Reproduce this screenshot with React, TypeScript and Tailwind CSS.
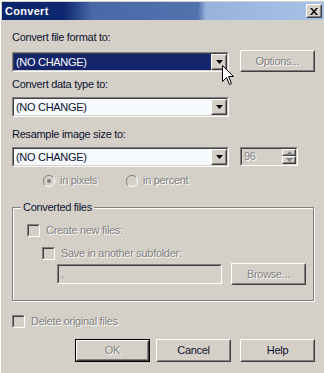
import React from 'react';

// Win2000 style "Convert" dialog

function Sunken({ className = '', inner = '', children }: { className?: string; inner?: string; children?: React.ReactNode }) {
  return (
    <div className={`border border-t-[#808080] border-l-[#808080] border-r-white border-b-white ${className}`}>
      <div className={`h-full border border-t-[#404040] border-l-[#404040] border-r-[#d4d0c8] border-b-[#d4d0c8] ${inner}`}>
        {children}
      </div>
    </div>
  );
}

function Raised({ className = '', children }: { className?: string; children?: React.ReactNode }) {
  return (
    <div className={`border border-t-white border-l-white border-r-[#404040] border-b-[#404040] bg-[#d4d0c8] ${className}`}>
      <div className="h-full border border-t-[#d4d0c8] border-l-[#d4d0c8] border-r-[#808080] border-b-[#808080] flex items-center justify-center">
        {children}
      </div>
    </div>
  );
}

function DownArrow({ color = '#000' }: { color?: string }) {
  return (
    <svg width="7" height="4" viewBox="0 0 7 4">
      <polygon points="0,0 7,0 3.5,4" fill={color} />
    </svg>
  );
}

function Combo({ selected }: { selected?: boolean }) {
  return (
    <Sunken className="w-[217px] h-[20px]" inner={selected ? 'bg-[#14256b] flex' : 'bg-[#f6f9fd] flex'}>
      <div className={selected ? 'flex-1 pl-[2px] text-white leading-[16px]' : 'flex-1 pl-[2px] text-[#0c1230] leading-[16px]'}>
        (NO CHANGE)
      </div>
      <Raised className="w-[16px] h-[16px]">
        <DownArrow />
      </Raised>
    </Sunken>
  );
}

function Radio({ checked, label }: { checked?: boolean; label: string }) {
  return (
    <div className="flex items-center gap-[5px]">
      <svg width="12" height="12" viewBox="0 0 12 12">
        <circle cx="6" cy="6" r="5.5" fill="#d4d0c8" />
        <path d="M10 2 A5.6 5.6 0 0 0 2 10" stroke="#808080" strokeWidth="1" fill="none" />
        <path d="M2 10 A5.6 5.6 0 0 0 10 2" stroke="#ffffff" strokeWidth="1" fill="none" />
        {checked && <circle cx="6" cy="6" r="2" fill="#808080" />}
      </svg>
      <span className="text-[#808080] [text-shadow:1px_1px_0_#fff]">{label}</span>
    </div>
  );
}

function Check({ label }: { label: string }) {
  return (
    <div className="flex items-center gap-[6px] h-[13px]">
      <Sunken className="w-[13px] h-[13px]" inner="bg-[#d4d0c8]" />
      <span className="text-[#808080] [text-shadow:1px_1px_0_#fff]">{label}</span>
    </div>
  );
}

export default function App() {
  return (
    <div className="relative w-[324px] h-[373px] overflow-hidden bg-[#d4d0c8] pt-[2px] pl-[2px] shadow-[inset_1px_1px_0_#fff] font-['Liberation_Sans',Arial,sans-serif] text-[11px] leading-[13px] tracking-[-0.3px] text-[#0c1230] select-none">
      {/* title bar */}
      <div className="h-[18px] flex items-center justify-between bg-[linear-gradient(to_right,#0a246a_0px,#0d2870_62px,#4a68a8_90px,#5272ad_196px,#97b3db_204px,#a6c2e6_100%)]">
        <span className="pl-[3px] text-white font-bold tracking-[0.3px]">Convert</span>
        <Raised className="w-[16px] h-[14px] mr-[2px]">
          <svg width="8" height="7" viewBox="0 0 8 7">
            <path d="M0 0h2l2 2.5L6 0h2L5 3.5 8 7H6L4 4.5 2 7H0l3-3.5z" fill="#000" />
          </svg>
        </Raised>
      </div>

      <div className="pl-[10px] flex flex-col">
        <div className="mt-[11px]">Convert file format to:</div>
        <div className="mt-[6px] flex items-start">
          <div className="mt-[2px]">
            <Combo selected />
          </div>
          <Raised className="ml-[11px] w-[75px] h-[22px]">
            <span className="text-[#808080] [text-shadow:1px_1px_0_#fff]">Options...</span>
          </Raised>
        </div>

        <div className="mt-[6px]">Convert data type to:</div>
        <div className="mt-[6px]">
          <Combo />
        </div>

        <div className="mt-[11px]">Resample image size to:</div>
        <div className="mt-[6px] flex items-start">
          <Combo />
          <Sunken className="ml-[11px] w-[58px] h-[19px]" inner="bg-[#d4d0c8] flex items-center">
            <span className="flex-1 pl-[2px] text-[#808080] [text-shadow:1px_1px_0_#fff]">96</span>
            <div className="flex flex-col w-[14px] h-full">
              <Raised className="flex-1">
                <svg width="5" height="3" viewBox="0 0 5 3">
                  <polygon points="2.5,0 5,3 0,3" fill="#808080" />
                </svg>
              </Raised>
              <Raised className="flex-1">
                <DownArrow color="#808080" />
              </Raised>
            </div>
          </Sunken>
        </div>

        <div className="mt-[7px] h-[13px] flex items-center pl-[31px]">
          <div className="w-[83px]">
            <Radio checked label="in pixels" />
          </div>
          <Radio label="in percent" />
        </div>

        {/* group box */}
        <div className="relative mt-[20px] w-[302px] h-[94px] border border-[#808080] shadow-[inset_1px_1px_0_#fff,1px_1px_0_#fff] pt-[16px] pl-[14px]">
          <span className="absolute -top-[7px] left-[8px] px-[2px] bg-[#d4d0c8]">Converted files</span>
          <Check label="Create new files:" />
          <div className="mt-[10px] ml-[15px]">
            <Check label="Save in another subfolder:" />
          </div>
          <div className="mt-[3px] ml-[30px] flex items-center gap-[9px]">
            <Sunken className="w-[165px] h-[20px]" inner="bg-[#d4d0c8] pl-[2px] text-[#808080] leading-[16px]">
              .
            </Sunken>
            <Raised className="w-[75px] h-[22px]">
              <span className="text-[#808080] [text-shadow:1px_1px_0_#fff]">Browse...</span>
            </Raised>
          </div>
        </div>

        <div className="mt-[14px]">
          <Check label="Delete original files" />
        </div>

        <div className="mt-[11px] ml-[63px] flex items-center">
          <div className="border border-black">
            <Raised className="w-[73px] h-[21px]">
              <span className="text-[#808080] [text-shadow:1px_1px_0_#fff]">OK</span>
            </Raised>
          </div>
          <Raised className="ml-[6px] w-[75px] h-[23px]">
            <span>Cancel</span>
          </Raised>
          <Raised className="ml-[9px] w-[75px] h-[23px]">
            <span>Help</span>
          </Raised>
        </div>
      </div>

      {/* mouse pointer */}
      <svg className="absolute left-[222px] top-[65px]" width="13" height="21" viewBox="0 0 13 21">
        <path d="M0.5 0.5 L0.5 16.5 L4.5 12.5 L7.5 19.5 L9.5 18.5 L6.5 11.5 L11.5 11.5 Z" fill="#fff" stroke="#000" strokeWidth="1" />
      </svg>
    </div>
  );
}
